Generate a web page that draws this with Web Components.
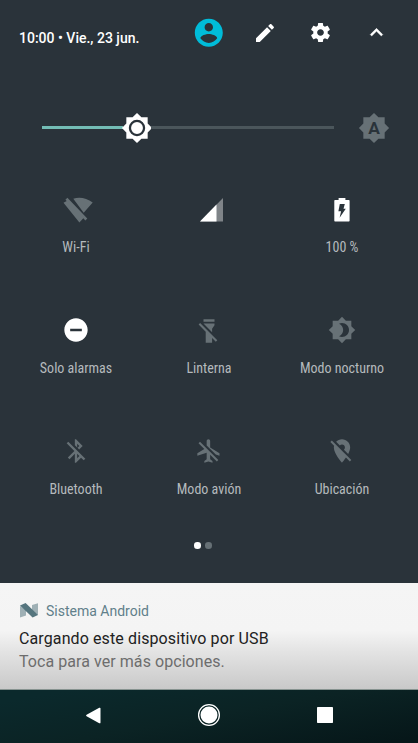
<!DOCTYPE html>
<html lang="es">
<head>
<meta charset="utf-8">
<meta name="viewport" content="width=device-width">
<title>Ajustes rápidos</title>
<style>
    body {
        margin: 0;
        background: #2a333a;
        font-family: Roboto, "Liberation Sans", sans-serif;
        color: #fff;
    }
</style>
</head>
<body>
<quick-panel></quick-panel>

<script>
const SUN = 'M20 8.69V4h-4.69L12 .69 8.69 4H4v4.69L.69 12 4 15.31V20h4.69L12 23.31 15.31 20H20v-4.69L23.31 12z';

// every icon is drawn on a 24 unit grid unless it names its own box
const ICONS = {
    user: { body: '<path d="M12 2C6.48 2 2 6.48 2 12s4.48 10 10 10 10-4.48 10-10S17.52 2 12 2zm0 3c1.66 0 3 1.34 3 3s-1.34 3-3 3-3-1.34-3-3 1.34-3 3-3zm0 14.2c-2.5 0-4.71-1.28-6-3.22.03-1.99 4-3.08 6-3.08 1.99 0 5.97 1.09 6 3.08-1.29 1.94-3.5 3.22-6 3.22z"/>' },
    edit: { body: '<path d="M3 17.25V21h3.75L17.81 9.94l-3.75-3.75L3 17.25zM20.71 7.04c.39-.39.39-1.02 0-1.41l-2.34-2.34c-.39-.39-1.02-.39-1.41 0l-1.83 1.83 3.75 3.75 1.83-1.83z"/>' },
    settings: { body: '<path d="M19.43 12.98c.04-.32.07-.64.07-.98s-.03-.66-.07-.98l2.11-1.65c.19-.15.24-.42.12-.64l-2-3.46c-.12-.22-.39-.3-.61-.22l-2.49 1c-.52-.4-1.08-.73-1.69-.98l-.38-2.65C14.46 2.18 14.25 2 14 2h-4c-.25 0-.46.18-.49.42l-.38 2.65c-.61.25-1.17.59-1.69.98l-2.49-1c-.23-.09-.49 0-.61.22l-2 3.46c-.13.22-.07.49.12.64l2.11 1.65c-.04.32-.07.65-.07.98s.03.66.07.98l-2.11 1.65c-.19.15-.24.42-.12.64l2 3.46c.12.22.39.3.61.22l2.49-1c.52.4 1.08.73 1.69.98l.38 2.65c.03.24.24.42.49.42h4c.25 0 .46-.18.49-.42l.38-2.65c.61-.25 1.17-.59 1.69-.98l2.49 1c.23.09.49 0 .61-.22l2-3.46c.12-.22.07-.49-.12-.64l-2.11-1.65zM12 15.5c-1.93 0-3.5-1.57-3.5-3.5s1.57-3.5 3.5-3.5 3.5 1.57 3.5 3.5-1.57 3.5-3.5 3.5z"/>' },
    collapse: { body: '<path d="M12 8l-6 6 1.41 1.41L12 10.83l4.59 4.58L18 14z" stroke="currentColor" stroke-width=".4"/>' },
    sun: { body: `<path d="${SUN}"/><circle cx="12" cy="12" r="5.3" fill="none" stroke="#2a333a" stroke-width="1.7"/>` },
    auto: { body: `<path d="${SUN}"/><text x="12" y="16.5" text-anchor="middle" font-size="13" font-weight="700" fill="#2a333a">A</text>` },
    night: { body: `<path fill-rule="evenodd" d="${SUN}M12 18c-.89 0-1.74-.2-2.5-.55C11.56 16.5 13 14.42 13 12s-1.44-4.5-3.5-5.45C10.26 6.2 11.11 6 12 6c3.31 0 6 2.69 6 6s-2.69 6-6 6z"/>` },
    wifi: { box: '0 0 32 28', body: '<path d="M12.3 4.3C18 2.4 25.5 3.2 31.7 8.2L22.7 18.4zM4.4 5.4L6.4 3.3 26.3 24.1 24.4 26.1 22.3 23.9 18.4 28.1 2.5 8.3 5.7 6.7z" transform="translate(-1 -.6)"/>' },
    signal: { box: '0 0 28 28', body: '<path d="M28 3v23.5h-23z" opacity=".4"/><path d="M21.5 9.6v16.9H5z"/>' },
    battery: { box: '0 0 28 28', body: '<path fill-rule="evenodd" d="M10.6 3h6.8v2h3.5q.7 0 .7.7v20.1q0 .7-.7.7H7q-.7 0-.7-.7V5.7q0-.7.7-.7h3.6zM11.8 9h5l-1.3 4.8h2.3L11.6 22.8l1.5-6.6h-2.7z"/>' },
    dnd: { body: '<path d="M12 2C6.48 2 2 6.48 2 12s4.48 10 10 10 10-4.48 10-10S17.52 2 12 2zm5 11H7v-2h10z"/>' },
    torch: { box: '0 0 28 28', body: '<path d="M8.5 3.3h11v2.4h-11zM8.5 7.6h11v1.6l-2.4 3.6v3.4L8.5 7.6zM3.6 8.6l1.5-1.5L22.3 24.3l-1.5 1.5-3.7-3.7v4.6h-6.4V15.7z"/>' },
    bluetooth: { body: '<path d="M13 5.83l1.88 1.88-1.6 1.6 1.41 1.41 3.02-3.02L12 2h-1v5.03l2 2v-3.2zM5.41 4L4 5.41 10.59 12 5 17.59 6.41 19 11 14.41V22h1l4.29-4.29 2.3 2.29L20 18.59 5.41 4zM13 18.17v-3.76l1.88 1.88L13 18.17z"/>' },
    plane: { body: '<path d="M13 9V3.5c0-.83-.67-1.5-1.5-1.5S10 2.67 10 3.5v3.68l7.83 7.83L21 16v-2l-8-5zM3 5.27l4.99 4.99L2 14v2l8-2.5V19l-2 1.5V22l3.5-1 3.5 1v-1.5L13 19v-3.73L18.73 21 20 19.73 4.27 4 3 5.27z"/>' },
    location: { body: '<path d="M12 6.5c1.38 0 2.5 1.12 2.5 2.5 0 .74-.33 1.39-.83 1.85l3.63 3.63c.98-1.86 1.7-3.8 1.7-5.48 0-3.87-3.13-7-7-7-1.98 0-3.76.83-5.04 2.15l3.19 3.19c.46-.52 1.11-.84 1.85-.84zm4.37 9.6l-4.63-4.63-.11-.11L3.27 3 2 4.27l3.18 3.18C5.07 7.95 5 8.47 5 9c0 5.25 7 13 7 13s1.67-1.85 3.38-4.35L18.73 21 20 19.73l-3.63-3.63z"/>' },
    nougat: { box: '0 0 18 15', body: '<path d="M0 3l6 4v5.5L0 14.6zM18 .3v12L12 8V2z" fill="#9fb0b5"/><path d="M0 2.6L5.6 0 18 12l-5.4 2.6z" fill="#55757e"/>' },
    back: { body: '<path d="M4.8 11.2L18 4q1.3-.6 1.3.8v14.4q0 1.4-1.3.8L4.8 12.8q-1.2-.8 0-1.6z"/>' },
    home: { body: '<circle cx="12" cy="12" r="8.5"/><circle cx="12" cy="12" r="10.4" fill="none" stroke="currentColor" stroke-width="1.3"/>' },
    recent: { body: '<rect x="4" y="4" width="16" height="16" rx=".7"/>' }
};

define();

function define() {
    class SysIcon extends HTMLElement {
        connectedCallback() {
            const icon = ICONS[this.getAttribute('name')];
            this.attachShadow({mode: 'open'}).innerHTML = `
            <style>
                :host { display: block; flex: none; width: 28px; height: 28px; }
                svg { display: block; width: 100%; height: 100%; fill: currentColor; overflow: visible; }
            </style>
            <svg viewBox="${icon.box || '0 0 24 24'}">${icon.body}</svg>
            `;
        }
    }

    class StatusHeader extends HTMLElement {
        constructor() {
            super();
            this.attachShadow({mode: 'open'}).innerHTML = `
            <style>
                :host { display: flex; height: 65px; box-sizing: border-box; padding-left: 19px; align-items: center; }
                .clock { flex: none; width: 162px; padding-top: 11px; font-size: 14px; font-weight: 500; line-height: 18px; white-space: nowrap; }
                nav { display: grid; grid-template-columns: 56px 56px 55px 56px; justify-items: center; align-items: center; }
                sys-icon { width: 24px; height: 24px; }
                .user { width: 33.6px; height: 33.6px; color: #00bcd9; }
                .gear { width: 23px; height: 23px; }
                .up { width: 25px; height: 25px; }
            </style>
            <div class="clock"><slot></slot></div>
            <nav>
                <sys-icon class="user" name="user"></sys-icon>
                <sys-icon name="edit"></sys-icon>
                <sys-icon class="gear" name="settings"></sys-icon>
                <sys-icon class="up" name="collapse"></sys-icon>
            </nav>
            `;
        }
    }

    class BrightnessSlider extends HTMLElement {
        constructor() {
            super();
            this.attachShadow({mode: 'open'}).innerHTML = `
            <style>
                :host { display: flex; align-items: center; height: 32px; margin-top: 46.5px; padding-left: 42px; }
                .on, .off { height: 2.5px; }
                .on { width: 80.5px; background: #73bdb5; }
                .off { width: 183.5px; background: #4b565b; }
                sys-icon { width: 32px; height: 32px; }
                .thumb { margin: 0 -2px; }
                .auto { margin-left: 24px; color: #677176; }
            </style>
            <div class="on"></div>
            <sys-icon class="thumb" name="sun"></sys-icon>
            <div class="off"></div>
            <sys-icon class="auto" name="auto"></sys-icon>
            `;
        }
    }

    class QuickTile extends HTMLElement {
        constructor() {
            super();
            this.attachShadow({mode: 'open'}).innerHTML = `
            <style>
                :host { display: flex; flex-direction: column; align-items: center; height: 121px; color: #677176; }
                :host([on]) { color: #fff; }
                :host([icon="wifi"]) sys-icon { width: 32px; margin-left: 4px; }
                p { margin: 15.5px 0 0; font-family: "Roboto Condensed", Roboto, sans-serif; font-stretch: 75%; font-size: 14px; line-height: 18px; color: #b5babd; white-space: nowrap; }
            </style>
            <sys-icon></sys-icon>
            <p><slot></slot></p>
            `;
            // the name has to be there before the icon is connected
            this.shadowRoot.querySelector('sys-icon').setAttribute('name', this.getAttribute('icon') || 'dnd');
        }
    }

    class PageDots extends HTMLElement {
        constructor() {
            super();
            this.attachShadow({mode: 'open'}).innerHTML = `
            <style>
                :host { display: flex; justify-content: center; gap: 4.5px; margin-right: 12px; }
                i { width: 6.6px; height: 6.6px; border-radius: 50%; background: #667075; }
                i:first-of-type { background: #fff; }
            </style>
            <i></i><i></i>
            `;
        }
    }

    class SystemNotification extends HTMLElement {
        constructor() {
            super();
            this.attachShadow({mode: 'open'}).innerHTML = `
            <style>
                :host { display: block; height: 107px; box-sizing: border-box; padding: 18px 19px 0; border-bottom: 1px solid #879390; background: linear-gradient(#f5f5f5 0, #f4f4f4 45%, #e3e3e3 65%, #c9c9c9 100%); color: #212121; }
                header { display: flex; align-items: center; gap: 8px; height: 19px; padding-left: 1px; font-size: 14px; color: #617f8a; }
                sys-icon { width: 18px; height: 15px; }
                h2, p { margin: 0; font-size: 16px; font-weight: 400; line-height: 23px; white-space: nowrap; }
                h2 { margin-top: 7px; letter-spacing: .11px; }
                p { letter-spacing: .06px; color: #6d6d6d; }
            </style>
            <header><sys-icon name="nougat"></sys-icon><slot name="app"></slot></header>
            <h2><slot name="title"></slot></h2>
            <p><slot></slot></p>
            `;
        }
    }

    class NavBar extends HTMLElement {
        constructor() {
            super();
            this.attachShadow({mode: 'open'}).innerHTML = `
            <style>
                :host { display: grid; grid-template-columns: repeat(3, 116px); justify-content: center; justify-items: center; align-items: center; height: 53px; box-sizing: border-box; padding-bottom: 3px; background: linear-gradient(170deg, #0b292c 10%, #0b2324 50%, #061719 95%); }
            </style>
            <sys-icon name="back" style="width: 23px; height: 23px"></sys-icon>
            <sys-icon name="home" style="width: 24px; height: 24px"></sys-icon>
            <sys-icon name="recent" style="width: 24px; height: 24px"></sys-icon>
            `;
        }
    }

    class QuickPanel extends HTMLElement {
        constructor() {
            super();
            this.attachShadow({mode: 'open'}).innerHTML = `
            <style>
                :host { display: flex; flex-direction: column; height: 743px; overflow: hidden; }
                .tiles { display: grid; grid-template-columns: repeat(3, 133px); justify-content: center; margin-top: 51px; height: 347.5px; }
                .fill { flex: 1; }
            </style>
            <status-header>10:00 • Vie., 23 jun.</status-header>
            <brightness-slider></brightness-slider>
            <div class="tiles">
                <quick-tile icon="wifi">Wi-Fi</quick-tile>
                <quick-tile icon="signal" on></quick-tile>
                <quick-tile icon="battery" on>100 %</quick-tile>
                <quick-tile icon="dnd" on>Solo alarmas</quick-tile>
                <quick-tile icon="torch">Linterna</quick-tile>
                <quick-tile icon="night">Modo nocturno</quick-tile>
                <quick-tile icon="bluetooth">Bluetooth</quick-tile>
                <quick-tile icon="plane">Modo avión</quick-tile>
                <quick-tile icon="location">Ubicación</quick-tile>
            </div>
            <page-dots></page-dots>
            <div class="fill"></div>
            <system-notification>
                <span slot="app">Sistema Android</span>
                <span slot="title">Cargando este dispositivo por USB</span>
                Toca para ver más opciones.
            </system-notification>
            <nav-bar></nav-bar>
            `;
        }
    }

    customElements.define('status-header', StatusHeader);
    customElements.define('brightness-slider', BrightnessSlider);
    customElements.define('quick-tile', QuickTile);
    customElements.define('page-dots', PageDots);
    customElements.define('system-notification', SystemNotification);
    customElements.define('nav-bar', NavBar);
    customElements.define('quick-panel', QuickPanel);
    customElements.define('sys-icon', SysIcon);
}
</script>
</body>
</html>
